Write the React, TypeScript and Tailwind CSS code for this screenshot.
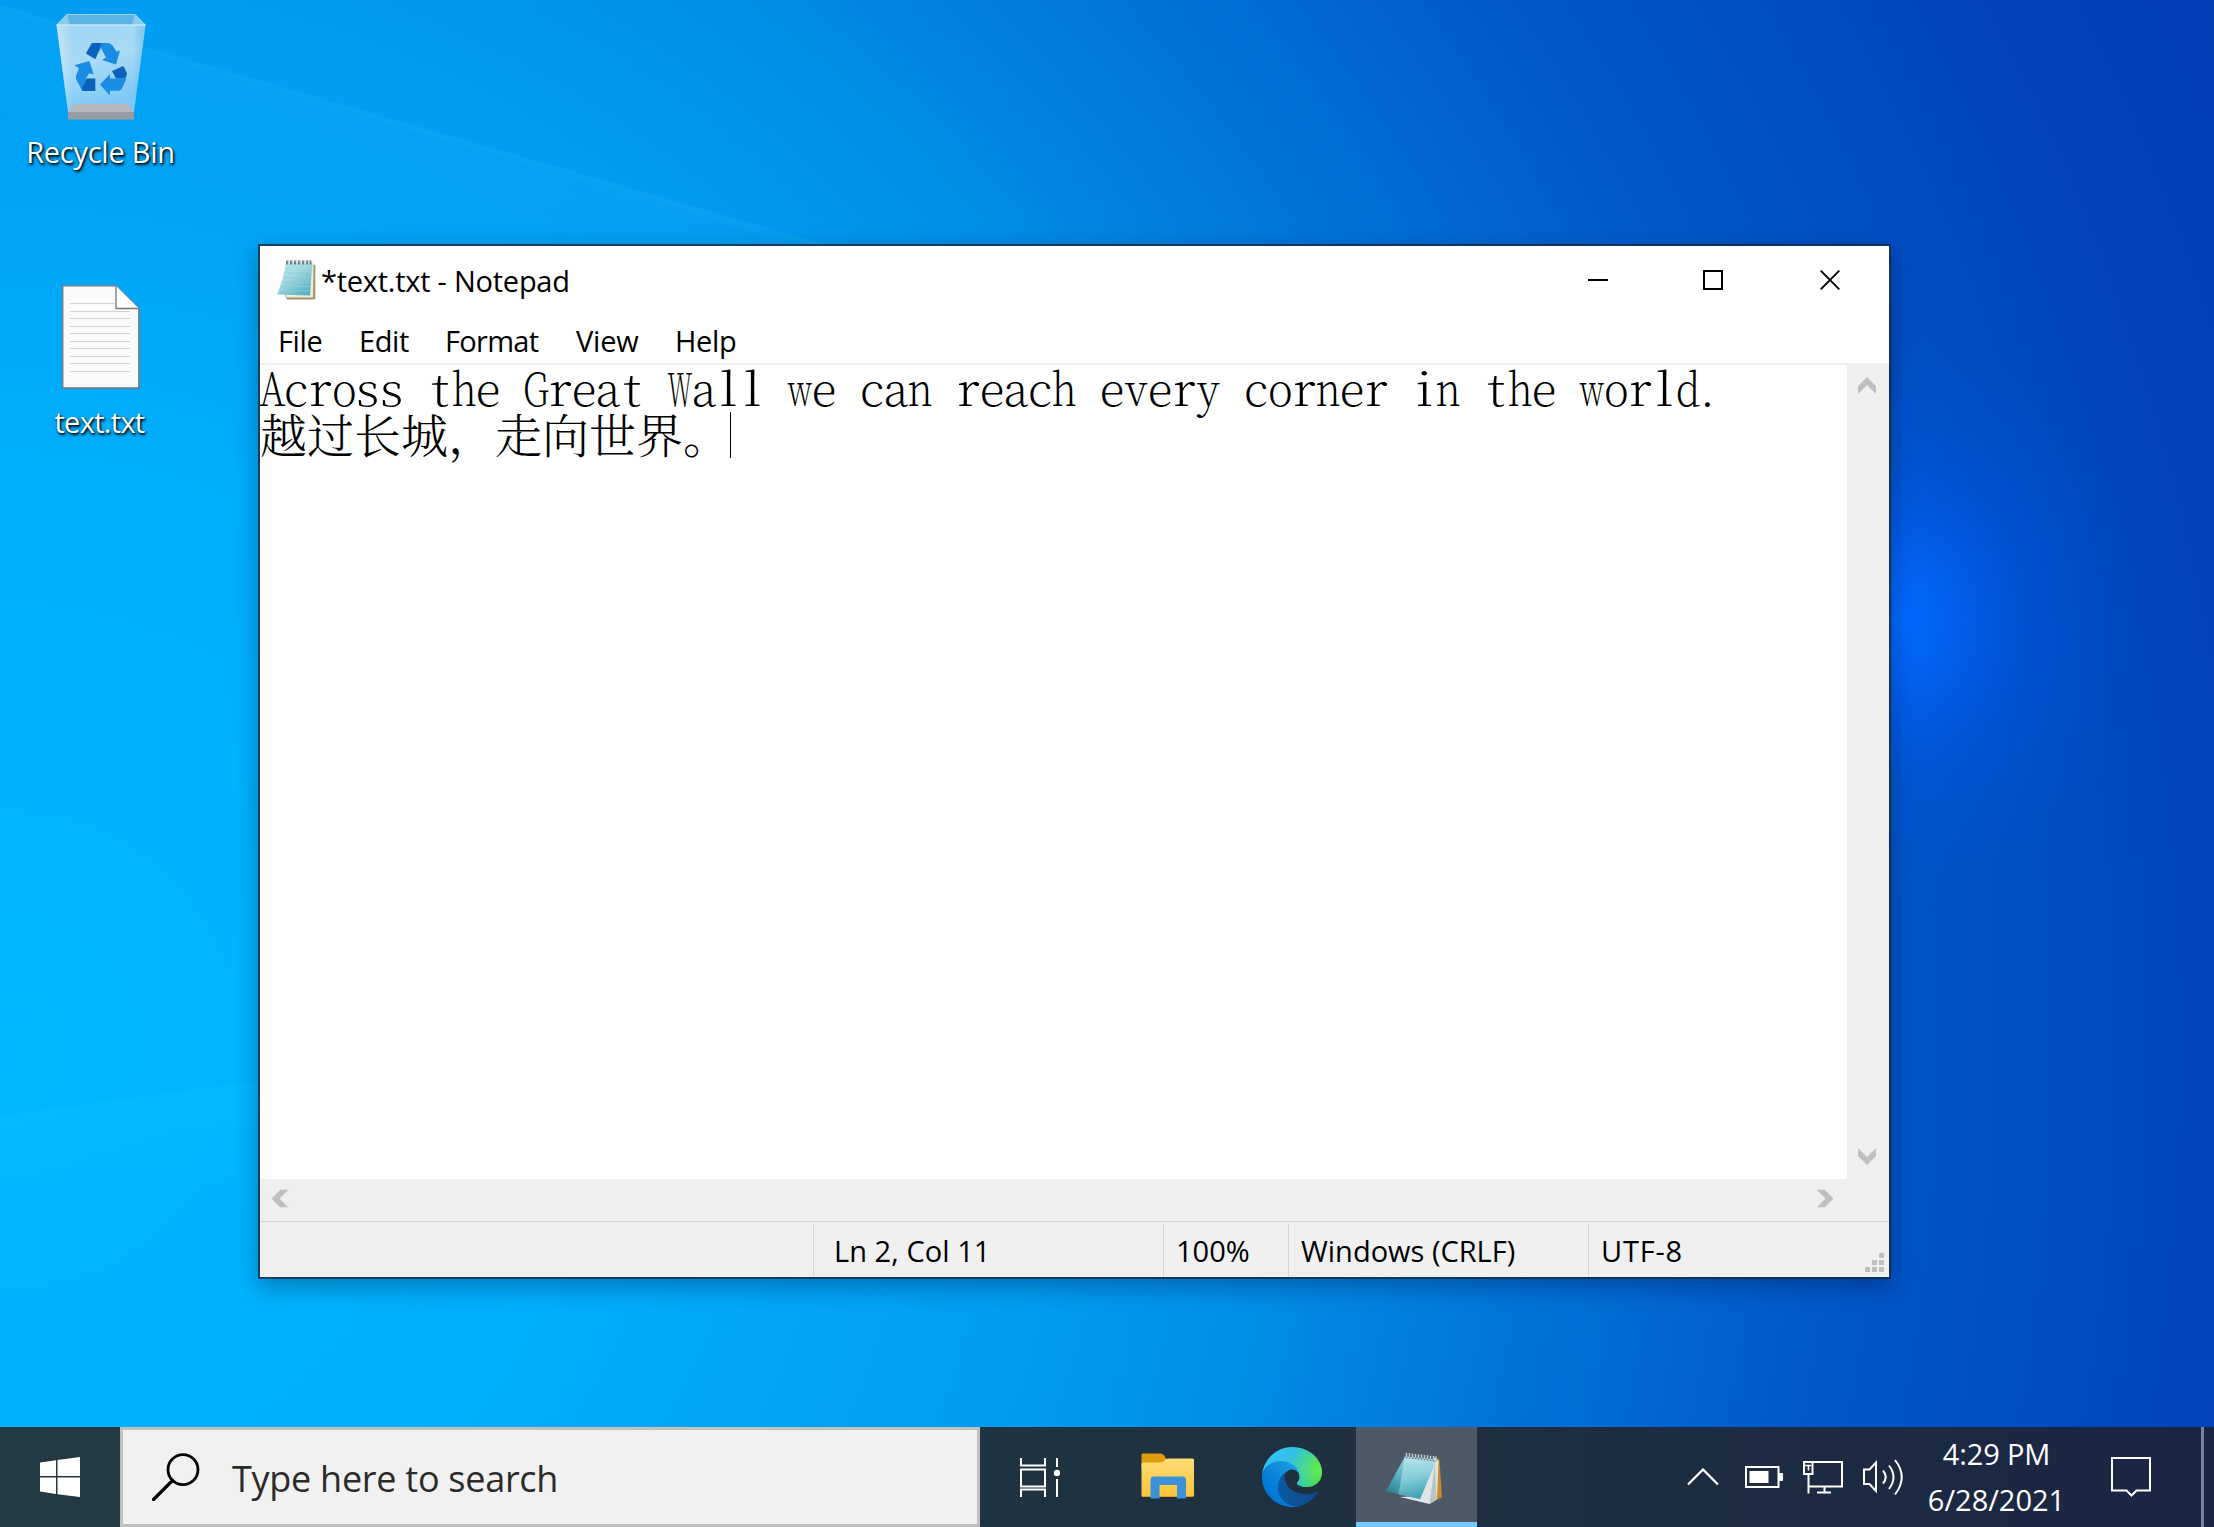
import type { ReactNode } from "react";

const LINE_ONE = "Across the Great Wall we can reach every corner in the world.";
const LINE_TWO = "越过长城，走向世界。";

/* Horizontal squeeze that fits wide letters into a half-width cell. */
const SQUEEZE: Record<string, string> = {
  W: "scale-x-[0.52]",
  w: "scale-x-[0.64]",
  G: "scale-x-[0.76]",
  A: "scale-x-[0.8]",
  h: "scale-x-[0.84]",
  n: "scale-x-[0.84]",
  d: "scale-x-[0.88]",
  v: "scale-x-[0.9]",
  y: "scale-x-[0.9]",
  o: "scale-x-[0.92]",
  l: "scale-x-[1.2]",
  i: "scale-x-[1.2]",
  t: "scale-x-[1.1]",
  r: "scale-x-[1.1]",
  s: "scale-x-[1.1]",
};

function Cells({ text }: { text: string }) {
  return (
    <div className="flex h-[46px] leading-[43px] whitespace-pre text-[46px] font-extralight">
      {text.split("").map((ch, i) => (
        <span key={i} className={ch === "." ? "flex w-6 shrink-0 justify-start" : "flex w-6 shrink-0 justify-center"}>
          <span className={SQUEEZE[ch] ?? "scale-x-100"}>{ch}</span>
        </span>
      ))}
    </div>
  );
}

function Wallpaper() {
  return (
    <svg className="absolute inset-0" width="2214" height="1527" viewBox="0 0 2214 1527">
      <defs>
        <radialGradient id="sky" gradientUnits="userSpaceOnUse" cx="0" cy="1050" r="2450">
          <stop offset="0" stopColor="#00b8ff" />
          <stop offset="0.245" stopColor="#00aefd" />
          <stop offset="0.433" stopColor="#009df1" />
          <stop offset="0.53" stopColor="#008ce7" />
          <stop offset="0.631" stopColor="#0073da" />
          <stop offset="0.714" stopColor="#0060d0" />
          <stop offset="0.776" stopColor="#0054c8" />
          <stop offset="0.837" stopColor="#004cc4" />
          <stop offset="0.917" stopColor="#0043bd" />
          <stop offset="1" stopColor="#003eb8" />
        </radialGradient>
        <radialGradient id="glow" gradientUnits="userSpaceOnUse" cx="0" cy="0" r="1" gradientTransform="translate(1900 620) scale(240 290)">
          <stop offset="0" stopColor="#006aff" />
          <stop offset="0.2" stopColor="#0066ff" stopOpacity="0.75" />
          <stop offset="0.55" stopColor="#0060f0" stopOpacity="0.25" />
          <stop offset="1" stopColor="#0058e0" stopOpacity="0" />
        </radialGradient>
        <linearGradient id="beam" gradientUnits="userSpaceOnUse" x1="450" y1="130" x2="415" y2="250">
          <stop offset="0" stopColor="#35c0ff" stopOpacity="0.22" />
          <stop offset="0.12" stopColor="#35c0ff" stopOpacity="0.08" />
          <stop offset="1" stopColor="#35c0ff" stopOpacity="0" />
        </linearGradient>
        <linearGradient id="beamLow" gradientUnits="userSpaceOnUse" x1="130" y1="1099" x2="145" y2="1200">
          <stop offset="0" stopColor="#20c8ff" stopOpacity="0.15" />
          <stop offset="1" stopColor="#20c8ff" stopOpacity="0" />
        </linearGradient>
      </defs>
      <rect width="2214" height="1527" fill="url(#sky)" />
      <rect x="1500" y="250" width="714" height="760" fill="url(#glow)" />
      <path d="M0 5 850 252 850 420 0 420Z" fill="url(#beam)" />
      <path d="M0 1116 258 1081 258 1300 0 1300Z" fill="url(#beamLow)" />
    </svg>
  );
}

function RecycleBinIcon() {
  return (
    <svg width="90" height="106" viewBox="0 0 90 106">
      <defs>
        <linearGradient id="binBody" x1="0" y1="0" x2="0.3" y2="1">
          <stop offset="0" stopColor="#9fd4f3" />
          <stop offset="0.5" stopColor="#a9daf6" />
          <stop offset="1" stopColor="#7cc9f5" />
        </linearGradient>
        <linearGradient id="binSide" x1="0" y1="0" x2="1" y2="0">
          <stop offset="0" stopColor="#fff" stopOpacity="0.35" />
          <stop offset="0.18" stopColor="#fff" stopOpacity="0" />
          <stop offset="0.86" stopColor="#4aa8e4" stopOpacity="0" />
          <stop offset="1" stopColor="#5db3e8" stopOpacity="0.5" />
        </linearGradient>
      </defs>
      <path d="M11 0H79L89.500 11H0.500Z" fill="#5cb4e6" />
      <path d="M11 0 14 11H0.500ZM79 0 76 11H89.500Z" fill="#8ccaf0" />
      <path d="M0.500 11H89.500L78 98H12Z" fill="url(#binBody)" />
      <path d="M0.500 11H89.500L78 98H12Z" fill="url(#binSide)" />
      <path d="M18 90H72L78 98H12Z" fill="#b4b9c0" />
      <path d="M12 98H78V105.500H12Z" fill="#989da3" />
      <path d="M11 0.500H79L89.500 11H0.500Z" fill="none" stroke="#a6d9f6" strokeWidth="0.8" />
      <path d="M0.500 11H89.500" stroke="#d8f0fc" strokeWidth="1.2" />
      <g fill="#1a8ce3">
        <path d="M35.500 29H52Q55 29 56.500 31.500L60.500 37.500 64 36.500 60 50.500 46 46 50 43.500 45 34 39 45 30 39.500Z" />
        <path d="M18.300 51.300 33.300 47 37.700 60.500 33 59.500 29.500 65 39 65V77H28Q26.500 77 25.500 75.500L20.500 66Q19.500 64 20 62L23 54Z" />
        <path d="M44 70.700 54 60V64.500H70.500L66 74.500Q65 76.700 62.500 76.700H54V81.500Z" />
      </g>
      <g fill="#0a62bd">
        <path d="M30 39.500 35.500 30.500Q36.300 29 38.500 29H45.500L39.500 45Z" />
        <path d="M31 64.500H39.300V77H28Q26.500 77 25.500 75.500Z" />
        <path d="M56 57 67.300 52 70.600 58Q71.300 59.500 70.500 61.500L69.300 64.500H60Z" />
      </g>
    </svg>
  );
}

const RULES = [26.5, 33.5, 41.5, 48.5, 56.5, 63.5, 71.5, 78.5, 86.5];

function TextFileIcon() {
  return (
    <svg width="78" height="104" viewBox="0 0 78 104">
      <path d="M0.800 0.800H54L76.800 23.500V103H0.800Z" fill="#fafafa" stroke="#75797d" strokeWidth="1.3" />
      <path d="M54 0.800V23.500H76.800" fill="#fff" stroke="#75797d" strokeWidth="1.3" />
      <path d="M8 18.500H53" stroke="#d2d2d2" />
      {RULES.map((y) => (
        <path key={y} d={`M8 ${y}H68`} stroke="#d2d2d2" />
      ))}
    </svg>
  );
}

function DesktopItem({ icon, label, spacing }: { icon: ReactNode; label: string; spacing: string }) {
  return (
    <div className="flex w-[201px] flex-col items-center">
      {icon}
      <span
        className={
          spacing +
          " mt-[12px] text-[29px] leading-[40px] whitespace-nowrap text-white [text-shadow:1px_2px_3px_rgba(0,0,0,0.9),1px_1px_2px_rgba(0,0,0,0.7)]"
        }
      >
        {label}
      </span>
    </div>
  );
}

function NotepadSmall() {
  return (
    <svg width="40" height="42" viewBox="0 0 40 42">
      <defs>
        <linearGradient id="pad" x1="0" y1="0" x2="0.8" y2="1">
          <stop offset="0" stopColor="#b9e3ea" />
          <stop offset="0.45" stopColor="#a5dae3" />
          <stop offset="1" stopColor="#4fb0c2" />
        </linearGradient>
      </defs>
      <path d="M34 5 39.300 6V40.500H11L9 36Z" fill="#a39574" />
      <path d="M34 4 37.500 5 37 38.500H11L9 35Z" fill="#f1ead6" />
      <path d="M10 3.500H36.500Q35 20 34 36.500L1 35.500Q7.500 20 10 3.500Z" fill="url(#pad)" />
      <path d="M8.500 14H34M7.500 18.500H34M6.500 23H33.500M5 27.500H33.500M4 32H33" stroke="#8ecbd6" strokeWidth="0.8" />
      <path d="M11 1.500V5.500M15 1.500V5.500M19 1.500V5.500M23 1.500V5.500M27 1.500V5.500M31 1.500V5.500M34.500 1.500V5.500" stroke="#6d7478" strokeWidth="1.8" />
      <path d="M12.500 1V3.500M16.500 1V3.500M20.500 1V3.500M24.500 1V3.500M28.500 1V3.500M32.500 1V3.500" stroke="#c9ced0" strokeWidth="1.4" />
    </svg>
  );
}

function NotepadLarge() {
  return (
    <svg width="57" height="54" viewBox="0 0 57 54">
      <defs>
        <linearGradient id="padBig" x1="0.1" y1="0.9" x2="0.7" y2="0">
          <stop offset="0" stopColor="#2b7f90" />
          <stop offset="0.45" stopColor="#5fb5c4" />
          <stop offset="1" stopColor="#b4e4ec" />
        </linearGradient>
        <linearGradient id="padFront" x1="0" y1="0" x2="0.4" y2="1">
          <stop offset="0" stopColor="#c8eef3" />
          <stop offset="0.55" stopColor="#8fd2de" />
          <stop offset="1" stopColor="#3fa3b6" />
        </linearGradient>
      </defs>
      <path d="M50 6 53.500 8 56 45.500 50 48Z" fill="#c98a2c" />
      <path d="M49 5 52.500 9 51 47 43.500 52 14 45 33 44Z" fill="#dfe5e6" />
      <path d="M49 12 50.500 48 43.500 52Z" fill="#b9c2c4" />
      <path d="M19 4.500 50.500 8 34 47 0 39Z" fill="url(#padBig)" />
      <path d="M19 4.500 50.500 8 34 47 12.500 42.500Z" fill="url(#padFront)" fillOpacity="0.75" />
      <path d="M20.500 1V5M23.500 1V5.500M26.500 1.500V6M29.500 2V6.200M32.500 2.200V6.500M35.500 2.500V7M38.500 3V7.200M41.500 3.300V7.500M44.500 3.700V8M47.500 4V8.200M50 4.500V8.500" stroke="#c4cacc" strokeWidth="1.5" />
      <path d="M20 5.500 50.500 9" stroke="#5f6a6e" strokeWidth="1.2" strokeDasharray="1.500 1.500" />
    </svg>
  );
}

const EDGE_WAVE =
  "M156.940 153.780c-.81 1.050-3.300 2.500-3.300 5.660 0 2.610 1.700 5.120 4.720 7.230 14.380 10 41.490 8.680 41.560 8.680a59.560 59.560 0 0 0 30.270-8.350 61.380 61.380 0 0 0 30.430-52.880c.26-22.410-8-37.310-11.340-43.910-21.190-41.440-66.930-65.290-116.670-65.290a128 128 0 0 0-128 126.200c.48-36.540 36.800-66.050 80-66.050 3.500 0 23.460.34 42 10.070 16.340 8.580 24.900 18.940 30.850 29.210 6.180 10.670 7.280 24.150 7.280 29.520s-2.740 13.330-7.800 19.910z";

function EdgeIcon() {
  return (
    <svg width="60" height="60" viewBox="0 0 256 256">
      <defs>
        <linearGradient id="e1" gradientUnits="userSpaceOnUse" x1="63.300" y1="177" x2="241" y2="177">
          <stop offset="0" stopColor="#0c59a4" />
          <stop offset="1" stopColor="#114a8b" />
        </linearGradient>
        <linearGradient id="e2" gradientUnits="userSpaceOnUse" x1="157" y1="104" x2="50" y2="222">
          <stop offset="0" stopColor="#1b9de2" />
          <stop offset="0.16" stopColor="#1595df" />
          <stop offset="0.67" stopColor="#0680d7" />
          <stop offset="1" stopColor="#0078d4" />
        </linearGradient>
        <radialGradient id="e3" gradientUnits="userSpaceOnUse" cx="30" cy="55" r="235">
          <stop offset="0" stopColor="#35c1f1" />
          <stop offset="0.3" stopColor="#34c1ed" />
          <stop offset="0.55" stopColor="#2fc2df" />
          <stop offset="0.75" stopColor="#2bc3d2" />
          <stop offset="1" stopColor="#36c752" />
        </radialGradient>
        <radialGradient id="e4" gradientUnits="userSpaceOnUse" cx="245" cy="100" r="125">
          <stop offset="0" stopColor="#66eb50" />
          <stop offset="1" stopColor="#66eb50" stopOpacity="0" />
        </radialGradient>
      </defs>
      <g transform="translate(-4.630 -4.920)">
        <path d="M235.680 195.460a93.730 93.730 0 0 1-10.540 4.710 101.870 101.870 0 0 1-35.900 6.460c-47.320 0-88.540-32.550-88.540-74.320A31.480 31.480 0 0 1 117.130 105c-42.800 1.800-53.800 46.400-53.800 72.530 0 73.880 68.090 81.370 82.760 81.370 7.910 0 19.840-2.300 27-4.560l1.310-.44A128.340 128.340 0 0 0 241 201.100a4 4 0 0 0-5.320-5.640z" fill="url(#e1)" />
        <path d="M110.340 246.340A79.200 79.200 0 0 1 87.600 225a80.720 80.720 0 0 1 29.530-120c3.120-1.470 8.450-4.130 15.540-4a32.350 32.350 0 0 1 25.690 13 31.880 31.880 0 0 1 6.360 18.660c0-.21 24.460-79.600-80-79.600-43.900 0-80 41.660-80 78.210a130.150 130.150 0 0 0 12.110 56 128 128 0 0 0 156.380 67.110 75.550 75.550 0 0 1-62.780-8z" fill="url(#e2)" />
        <path d={EDGE_WAVE} fill="url(#e3)" />
        <path d={EDGE_WAVE} fill="url(#e4)" />
      </g>
    </svg>
  );
}

function FolderIcon() {
  return (
    <svg width="54" height="48" viewBox="0 0 54 48">
      <defs>
        <linearGradient id="fold" x1="0" y1="0" x2="0" y2="1">
          <stop offset="0" stopColor="#ffdc74" />
          <stop offset="1" stopColor="#fbc43c" />
        </linearGradient>
      </defs>
      <path d="M0.500 2Q0.500 0.500 2 0.500H20Q22 0.500 23.500 3L26 7V15H0.500Z" fill="#e19c0b" />
      <path d="M2 9.500H19Q21.500 9.500 23 8L24.500 6.500Q26 5.500 28 5.500H51.500Q53 5.500 53 7V42Q53 43.500 51.500 43.500H2Q0.500 43.500 0.500 42V11Q0.500 9.500 2 9.500Z" fill="url(#fold)" />
      <path d="M0.500 42Q0.500 43.500 2 43.500H51.500Q53 43.500 53 42" fill="none" stroke="#e0a11d" strokeWidth="1" />
      <path d="M9.500 45V27Q9.500 23.500 13 23.500H41.500Q45 23.500 45 27V45.500H36V32H18.500V45.500H9.500Z" fill="#3c91d8" />
    </svg>
  );
}

function Arrow({ turn }: { turn: string }) {
  return (
    <svg className={turn} width="18" height="17" viewBox="0 0 18 17">
      <path d="M0 9 9 0 18 9V17L9 8 0 17Z" fill="#bfbfbf" />
    </svg>
  );
}

function StatusCell({ width, children, extra }: { width: string; children?: ReactNode; extra?: string }) {
  return (
    <div className={`${width} ${extra ?? ""} flex h-[53px] items-center border-r border-[#d5d5d5] whitespace-nowrap`}>
      {children}
    </div>
  );
}

function NotepadWindow() {
  return (
    <div className="absolute top-[246px] left-[260px] flex h-[1031px] w-[1629px] flex-col bg-white text-[29px] text-black shadow-[0_0_0_2px_rgba(24,42,62,0.78),0_8px_22px_2px_rgba(0,10,40,0.32)]">
      <div className="flex h-[70px] items-center">
        <div className="ml-[16px] pb-[2px]">
          <NotepadSmall />
        </div>
        <span className="ml-[5px] tracking-[-0.25px] whitespace-nowrap">*text.txt - Notepad</span>
        <div className="ml-auto flex pb-[2px]">
          <div className="flex w-[114px] items-center justify-center">
            <div className="h-[2px] w-5 bg-black" />
          </div>
          <div className="flex w-[116px] items-center justify-center">
            <div className="size-5 border-2 border-black" />
          </div>
          <div className="flex w-[118px] items-center justify-center">
            <svg width="20" height="20" viewBox="0 0 20 20">
              <path d="M0.700 0.700 19.300 19.300M19.300 0.700 0.700 19.300" stroke="#000" strokeWidth="1.9" />
            </svg>
          </div>
        </div>
      </div>
      <div className="flex h-[47px] items-center pt-[2px]">
        <span className="ml-[18px] w-[81px] tracking-[-0.4px]">File</span>
        <span className="w-[86px] tracking-[-0.4px]">Edit</span>
        <span className="w-[131px] tracking-[-0.7px]">Format</span>
        <span className="w-[99px] tracking-[-0.2px]">View</span>
        <span className="tracking-[-0.3px]">Help</span>
      </div>
      <div className="flex h-[816px]">
        <div className="w-[1587px] border-t-2 border-[#efefef] font-['Noto_Serif_CJK_SC','Noto_Sans_CJK_SC',serif]">
          <Cells text={LINE_ONE} />
          <div className="flex">
            <span className="text-[47px] leading-[43px] font-light">{LINE_TWO}</span>
            <span className="mt-[1px] h-[46px] w-px bg-black" />
          </div>
        </div>
        <div className="flex w-[42px] flex-col items-center justify-between bg-[#efefef] pt-[14px] pr-[2px] pb-[14px]">
          <Arrow turn="rotate-0" />
          <Arrow turn="rotate-180" />
        </div>
      </div>
      <div className="flex h-[42px] items-center justify-between bg-[#efefef] pr-[55px] pb-[3px] pl-[11px]">
        <Arrow turn="-rotate-90" />
        <Arrow turn="rotate-90" />
      </div>
      <div className="flex h-[56px] items-end border-t border-[#d2d2d2] bg-[#f0f0f0]">
        <StatusCell width="w-[554px]" />
        <StatusCell width="w-[350px]" extra="pl-[20px] tracking-[0.05px]">Ln 2, Col 11</StatusCell>
        <StatusCell width="w-[125px]" extra="pl-[12px]">100%</StatusCell>
        <StatusCell width="w-[300px]" extra="pl-[12px]">Windows (CRLF)</StatusCell>
        <div className="flex h-[53px] grow items-center pl-[12px] tracking-[0.8px]">UTF-8</div>
        <svg className="mr-[5px] mb-[5px]" width="19" height="19" viewBox="0 0 19 19">
          <path d="M14 0h5v5h-5zM7 7h5v5H7zM14 7h5v5h-5zM0 14h5v5H0zM7 14h5v5H7zM14 14h5v5h-5z" fill="#bfbfbf" />
        </svg>
      </div>
    </div>
  );
}

function Taskbar() {
  return (
    <div className="absolute bottom-0 left-0 flex h-[100px] w-full items-center bg-linear-to-r from-[#233943] via-[#1e3040] via-65% to-[#1a2544]">
      <div className="flex h-full w-[120px] items-center justify-center">
        <svg width="40" height="40" viewBox="0 0 40 40">
          <path d="M0 5.500 16 3.200V19H0ZM17.500 3 40 0V19H17.500ZM0 20.500H16V37L0 34.500ZM17.500 20.500H40V40L17.500 37.200Z" fill="#fff" />
        </svg>
      </div>
      <div className="flex h-full w-[860px] items-center border-[3px] border-[#c0c0c0] bg-[#f1f1f1]">
        <svg className="ml-[29px]" width="48" height="48" viewBox="0 0 48 48">
          <circle cx="31" cy="16.700" r="15" fill="none" stroke="#000" strokeWidth="2.8" />
          <path d="M20.500 27.500 1.500 46.500" stroke="#000" strokeWidth="3.200" strokeLinecap="round" />
        </svg>
        <span className="ml-[32px] pt-[4px] text-[36px] leading-[50px] tracking-[-0.27px] text-[#2b2b2b]">Type here to search</span>
      </div>
      <div className="flex h-full w-[120px] items-center justify-center">
        <svg width="40" height="39" viewBox="0 0 40 39" fill="none" stroke="#fff" strokeWidth="2">
          <path d="M1 0V7.500H25V0M1 11.500H25V28.500H1ZM1 39V31.500H25V39M37 0V9M37 21V39" />
          <circle cx="37" cy="15" r="3.200" fill="#fff" stroke="none" />
        </svg>
      </div>
      <div className="mr-[2px] ml-[7px] flex h-full w-[122px] items-center justify-center">
        <FolderIcon />
      </div>
      <div className="mr-[3px] flex h-full w-[122px] items-center justify-center">
        <EdgeIcon />
      </div>
      <div className="flex h-full w-[121px] flex-col items-center border-b-[5px] border-[#76c9ff] bg-[#4d5a65] pt-[25px] pr-[4px]">
        <NotepadLarge />
      </div>
      <svg className="ml-[210px]" width="32" height="18" viewBox="0 0 32 18">
        <path d="M1 16.500 16 1.500 31 16.500" fill="none" stroke="#fff" strokeWidth="2.200" />
      </svg>
      <svg className="ml-[26px]" width="38" height="22" viewBox="0 0 38 22">
        <path d="M1 1H33.500V21H1Z" fill="none" stroke="#fff" strokeWidth="2" />
        <path d="M4.500 5H23.500V17H4.500ZM34 7H38V15H34Z" fill="#fff" />
      </svg>
      <svg className="ml-[20px]" width="40" height="33" viewBox="0 0 40 33" fill="none" stroke="#fff" strokeWidth="2">
        <path d="M10 1H39V25.500H6M1 1H9.500V13H1ZM5.500 13V32.500M21.500 26V31.500M14 31.500H28" />
        <path d="M2 4.500H8M5.500 5V9.500" strokeWidth="1.600" />
      </svg>
      <svg className="ml-[20px]" width="40" height="38" viewBox="0 0 40 38" fill="none" stroke="#fff" strokeWidth="2">
        <path d="M1 11.500H6.500L13 4.500V33L6.500 26H1Z" />
        <path d="M20 12.500Q25.500 19 20 25.500M26 7.500Q35 19 26 31M32 2Q45.500 19 32 36.500" />
      </svg>
      <div className="ml-[13px] flex w-[161px] flex-col items-center text-[29px] leading-[46px] whitespace-nowrap text-white">
        <span className="tracking-[-0.15px]">4:29 PM</span>
        <span>6/28/2021</span>
      </div>
      <svg className="ml-[34px]" width="40" height="40" viewBox="0 0 40 40">
        <path d="M1 1H39V33.500H25.500L20.500 38.500 15.500 33.500H1Z" fill="none" stroke="#fff" strokeWidth="2" />
      </svg>
      <div className="ml-[50px] h-full w-[3px] bg-[#79839c]" />
    </div>
  );
}

export default function App() {
  return (
    <div className="relative h-[1527px] w-[2214px] overflow-hidden bg-[#0078d7] font-['Open_Sans','Noto_Sans',sans-serif]">
      <Wallpaper />
      <div className="relative flex w-[201px] flex-col pt-[14px]">
        <DesktopItem icon={<RecycleBinIcon />} label="Recycle Bin" spacing="tracking-[-0.25px]" />
        <div className="mt-[113px]">
          <DesktopItem icon={<TextFileIcon />} label="text.txt" spacing="pt-[1px] pr-[2px] tracking-[-0.7px]" />
        </div>
      </div>
      <NotepadWindow />
      <Taskbar />
    </div>
  );
}
